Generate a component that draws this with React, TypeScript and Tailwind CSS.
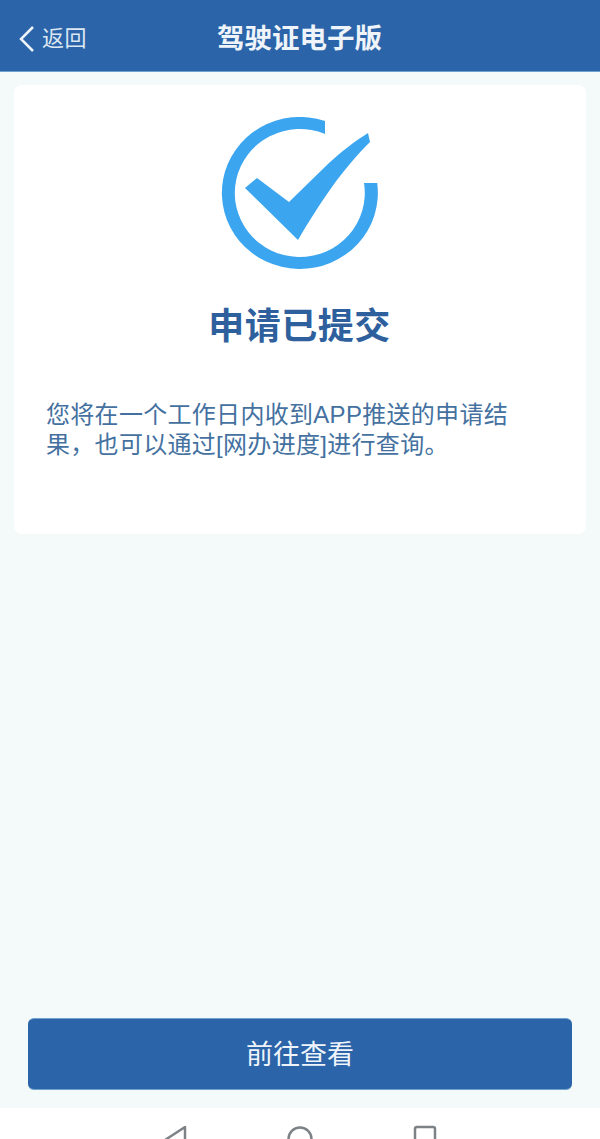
const cjk = "font-['Liberation_Sans','Noto_Sans_CJK_SC',sans-serif]";

function App() {
  return (
    <div className={`${cjk} h-[1139px] w-[600px] overflow-hidden flex flex-col bg-[#f4f9fa]`}>
      {/* Header */}
      <header className="h-[72px] shrink-0 bg-[#2b64a8] border-b border-[#6fa3cf] flex items-center relative">
        <div className="flex items-center pl-[18px] pt-[7px] text-[#dbe7f3]">
          <svg width="18" height="28" viewBox="0 0 18 28" fill="none" stroke="#eef4fa" strokeWidth="2.5">
            <path d="M15 2 L3 14 L15 26" />
          </svg>
          <span className="ml-[6px] text-[22px] leading-none tracking-[0.5px]">返回</span>
        </div>
        <h1 className="flex-1 text-center pr-[88px] pt-[6px] text-[27.5px] leading-none font-bold text-[#eef4fa]">
          驾驶证电子版
        </h1>
      </header>

      {/* Content */}
      <main className="flex-1 flex flex-col px-[14px] pt-[13px]">
        <div className="h-[449px] rounded-lg bg-white flex flex-col items-center pt-[32px] pr-[1px]">
          <svg width="158" height="154" viewBox="0 0 158 154" fill="none">
            <path d="M104 4 A78 76 0 1 0 156.2 66 L143 66 A65 64 0 1 1 104 17 Z" fill="#3ba5f0" />
            <path d="M24 71 L36 61 L68 85 L108 46 C120 35 134 24 147 16 L149 25 C136 38 126 50 116 63 C102 82 88 104 77 123 Z" fill="#3ba5f0" />
          </svg>
          <h2 className="mt-[34px] text-[36px] leading-[44px] font-bold tracking-[0.5px] text-[#2e609e]">申请已提交</h2>
          <p className="self-start mt-[51px] pl-[32px] pr-[60px] text-[24px] leading-[30px] tracking-[0.3px] text-[#44719f]">
            您将在一个工作日内收到APP推送的申请结果，也可以通过[网办进度]进行查询。
          </p>
        </div>

        <button className="mt-auto mb-[18px] mx-[14px] h-[72px] pt-[3px] rounded-md bg-[#2b64a8] border-t border-b border-[#6fa3cf] text-[27px] text-[#eef4fa]">
          前往查看
        </button>
      </main>

      {/* Android nav bar, cut off by the bottom edge */}
      <nav className="h-[31px] shrink-0 bg-white flex justify-center gap-[100px] pt-[17px] overflow-hidden">
        <svg width="24" height="30" viewBox="0 0 24 30" fill="none" stroke="#7d8287" strokeWidth="2.5">
          <path d="M22 2 V28 L2 15 Z" strokeLinejoin="round" />
        </svg>
        <svg width="26" height="30" viewBox="0 0 26 30" fill="none" stroke="#7d8287" strokeWidth="2.5">
          <circle cx="13" cy="14" r="11.5" />
        </svg>
        <svg width="24" height="30" viewBox="0 0 24 30" fill="none" stroke="#7d8287" strokeWidth="2.5">
          <rect x="2" y="2" width="20" height="26" rx="2" />
        </svg>
      </nav>
    </div>
  );
}

export default App;
